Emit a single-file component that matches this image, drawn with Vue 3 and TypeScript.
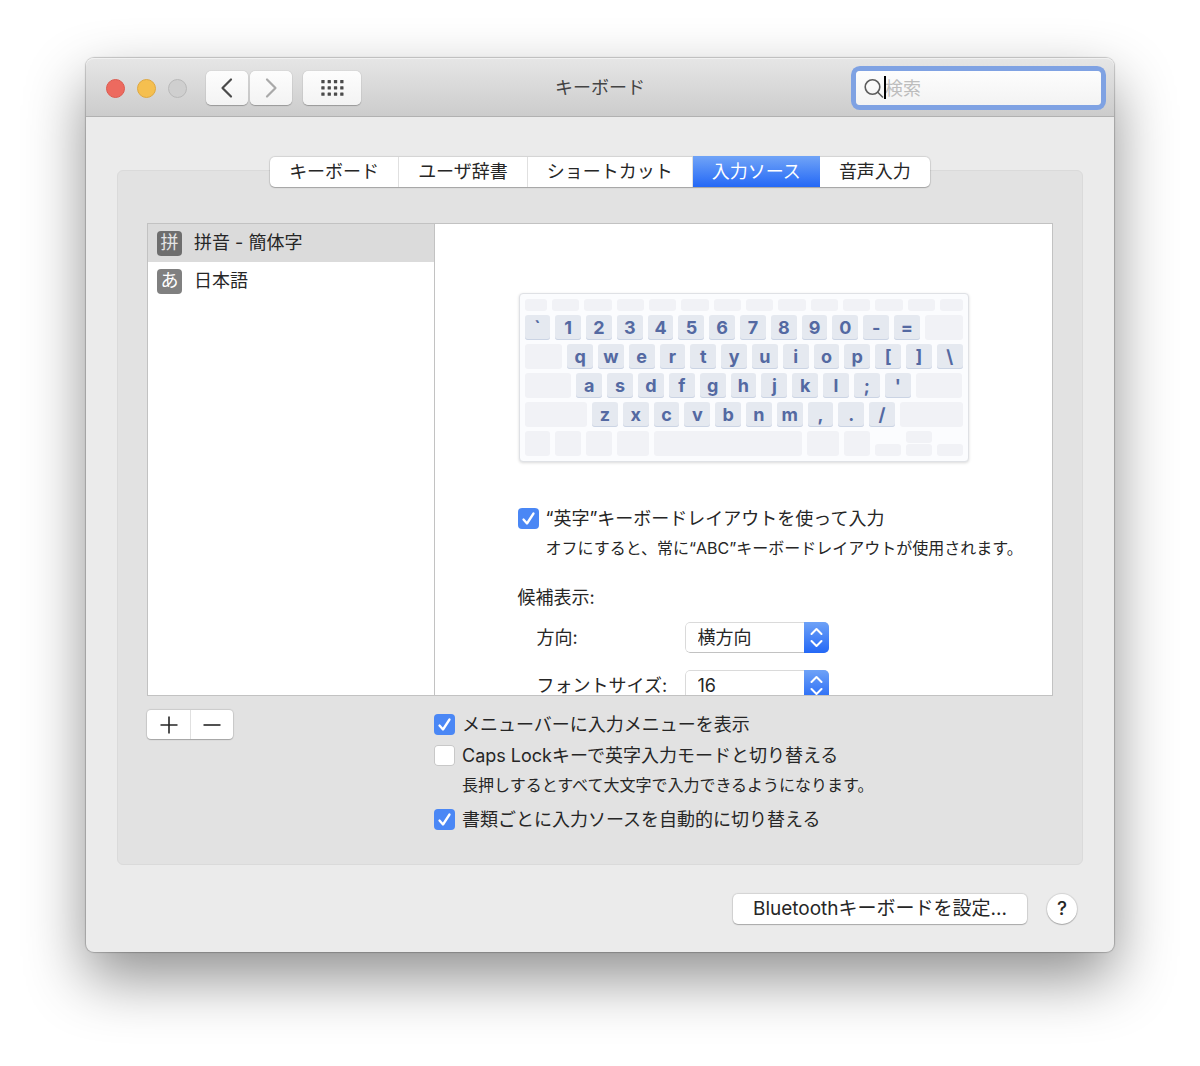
<script setup lang="ts">
import { ref } from 'vue'

interface Key {
  label?: string
  span: number
}

interface Source {
  id: string
  badge: string
  name: string
}

const tabs: string[] = ['キーボード', 'ユーザ辞書', 'ショートカット', '入力ソース', '音声入力']
const activeTab = ref('入力ソース')

const sources: Source[] = [
  { id: 'pinyin', badge: '拼', name: '拼音 - 簡体字' },
  { id: 'japanese', badge: 'あ', name: '日本語' },
]
const activeSource = ref('pinyin')

const letters = (text: string): Key[] => [...text].map((label) => ({ label, span: 26 }))
const blank = (...spans: number[]): Key[] => spans.map((span) => ({ span }))

const functionRow: Key[] = blank(23, ...Array(12).fill(28), 23)
const keyRows: Key[][] = [
  [...letters('`1234567890-='), ...blank(38)],
  [...blank(38), ...letters('qwertyuiop[]\\')],
  [...blank(47), ...letters("asdfghjkl;'"), ...blank(47)],
  [...blank(63), ...letters('zxcvbnm,./'), ...blank(63)],
]
const bottomRow: Key[] = blank(26, 26, 26, 32, 149, 32, 26)

const search = ref('')
const useLetterLayout = ref(true)
const direction = ref('横方向')
const fontSize = ref('16')
const showMenu = ref(true)
const capsLock = ref(false)
const perDocument = ref(true)
</script>

<template>
  <div class="desktop">
    <main class="window">
      <header class="titlebar">
        <div class="controls">
          <div class="lights">
            <button class="light red" aria-label="閉じる"></button>
            <button class="light yellow" aria-label="しまう"></button>
            <button class="light off" aria-label="拡大" disabled></button>
          </div>
          <div class="history">
            <button class="tool" aria-label="戻る">
              <svg width="14" height="22" viewBox="0 0 14 22"><path d="M11 2.500 2.500 11 11 19.500" fill="none" stroke="#4a4a4a" stroke-width="2.200" stroke-linecap="round" stroke-linejoin="round" /></svg>
            </button>
            <button class="tool" aria-label="進む">
              <svg width="14" height="22" viewBox="0 0 14 22"><path d="M3 2.500 11.500 11 3 19.500" fill="none" stroke="#a9a9a9" stroke-width="2.200" stroke-linecap="round" stroke-linejoin="round" /></svg>
            </button>
          </div>
          <button class="tool wide" aria-label="すべてを表示">
            <svg width="23" height="16" viewBox="0 0 23 16" fill="#4a4a4a">
              <template v-for="row in 3" :key="row">
                <rect v-for="col in 4" :key="col" :x="(col - 1) * 6.300 + 0.300" :y="(row - 1) * 6.200" width="3.300" height="3.300" rx="0.500" />
              </template>
            </svg>
          </button>
        </div>
        <h1>キーボード</h1>
        <div class="search">
          <svg width="20" height="20" viewBox="0 0 20 20" fill="none" stroke="#5c5c5c" stroke-width="1.600" stroke-linecap="round"><circle cx="8.500" cy="9" r="7.300" /><path d="m13.800 14.300 4.700 4.700" /></svg>
          <span class="caret"></span>
          <input v-model="search" type="text" placeholder="検索" aria-label="検索" />
        </div>
      </header>

      <div class="content">
        <nav class="tabs" role="tablist">
          <button
            v-for="tab in tabs"
            :key="tab"
            role="tab"
            :aria-selected="tab === activeTab"
            :class="{ active: tab === activeTab }"
            @click="activeTab = tab"
          >{{ tab }}</button>
        </nav>

        <section class="group">
          <div class="panel">
            <ul class="sources">
              <li v-for="source in sources" :key="source.id">
                <button :class="{ active: source.id === activeSource }" @click="activeSource = source.id">
                  <span class="badge">{{ source.badge }}</span>{{ source.name }}
                </button>
              </li>
            </ul>

            <div class="detail">
              <div class="keyboard">
                <div class="keys short">
                  <span v-for="(key, i) in functionRow" :key="i" class="key" :style="{ flexGrow: key.span }"></span>
                </div>
                <div v-for="(row, r) in keyRows" :key="r" class="keys">
                  <span
                    v-for="(key, i) in row"
                    :key="i"
                    class="key"
                    :class="{ lettered: key.label }"
                    :style="{ flexGrow: key.span }"
                  >{{ key.label }}</span>
                </div>
                <div class="keys">
                  <span v-for="(key, i) in bottomRow" :key="i" class="key" :style="{ flexGrow: key.span }"></span>
                  <span class="arrow"><i class="key"></i></span>
                  <span class="arrow"><i class="key"></i><i class="key"></i></span>
                  <span class="arrow"><i class="key"></i></span>
                </div>
              </div>

              <div class="form">
                <label class="check"><input v-model="useLetterLayout" type="checkbox" />“英字”キーボードレイアウトを使って入力</label>
                <p class="note">オフにすると、常に“ABC”キーボードレイアウトが使用されます。</p>
                <h2>候補表示:</h2>
                <div class="field">
                  <label for="direction">方向:</label>
                  <div class="popup">
                    <select id="direction" v-model="direction">
                      <option>横方向</option>
                      <option>縦方向</option>
                    </select>
                    <svg width="25" height="31" viewBox="0 0 25 31"><path d="m7.500 12 5-5 5 5M7.500 19l5 5 5-5" /></svg>
                  </div>
                </div>
                <div class="field">
                  <label for="size">フォントサイズ:</label>
                  <div class="popup">
                    <select id="size" v-model="fontSize">
                      <option>16</option>
                      <option>18</option>
                    </select>
                    <svg width="25" height="31" viewBox="0 0 25 31"><path d="m7.500 12 5-5 5 5M7.500 19l5 5 5-5" /></svg>
                  </div>
                </div>
              </div>
            </div>
          </div>

          <div class="below">
            <div class="edit">
              <button aria-label="追加"><svg width="18" height="18" viewBox="0 0 18 18"><path d="M9 0.500v17M0.500 9h17" /></svg></button>
              <button aria-label="削除"><svg width="18" height="18" viewBox="0 0 18 18"><path d="M0.500 9h17" /></svg></button>
            </div>
            <div class="options">
              <label class="check"><input v-model="showMenu" type="checkbox" />メニューバーに入力メニューを表示</label>
              <label class="check"><input v-model="capsLock" type="checkbox" />Caps Lockキーで英字入力モードと切り替える</label>
              <p class="note">長押しするとすべて大文字で入力できるようになります。</p>
              <label class="check"><input v-model="perDocument" type="checkbox" />書類ごとに入力ソースを自動的に切り替える</label>
            </div>
          </div>
        </section>

        <footer>
          <button class="push">Bluetoothキーボードを設定...</button>
          <button class="help" aria-label="ヘルプ">?</button>
        </footer>
      </div>
    </main>
  </div>
</template>

<style>
body {
  background: #fff;
}
</style>

<style scoped>
.desktop {
  padding: 58px 86px 114px;
}

.window {
  border-radius: 8px;
  background: #ebebeb;
  box-shadow: 0 0 1px 1px rgba(0, 0, 0, 0.2), 0 26px 60px rgba(0, 0, 0, 0.44);
  color: #262626;
  font-family: Inter, "Noto Sans CJK JP", sans-serif;
  font-size: 18px;
  line-height: 30px;
}

button,
input,
select {
  box-sizing: border-box;
  margin: 0;
  padding: 0;
  border: 0;
  color: inherit;
  font: inherit;
}

h1,
h2,
p,
ul {
  margin: 0;
  padding: 0;
  font-size: 18px;
  font-weight: 400;
  list-style: none;
}

svg {
  display: block;
  flex: none;
}

.titlebar {
  display: grid;
  grid-template-columns: 1fr auto 1fr;
  align-items: center;
  height: 56px;
  padding: 2px 13px 0;
  border-bottom: 1px solid #b1b1b1;
  border-radius: 8px 8px 0 0;
  background: linear-gradient(#e6e6e6, #cccccc);
  box-shadow: inset 0 1px #f1f1f1;
}

.titlebar h1 {
  color: #444;
}

.controls,
.lights,
.history {
  display: flex;
  align-items: center;
}

.lights {
  gap: 12px;
  margin: 0 19px 0 7px;
}

.light {
  width: 19px;
  height: 19px;
  border: 1px solid #dc5b50;
  border-radius: 50%;
}

.red {
  background: #ed6a5f;
}

.yellow {
  border-color: #dfa840;
  background: #f5bf4f;
}

.off {
  border-color: #b9b9b9;
  background: #cfcfcf;
}

.history {
  gap: 2px;
  margin-right: 11px;
}

.tool {
  display: flex;
  align-items: center;
  justify-content: center;
  width: 42px;
  height: 34px;
  border-radius: 5px;
  background: linear-gradient(#fdfdfd, #f3f3f3);
  box-shadow: 0 0 1px rgba(0, 0, 0, 0.3), 0 1px 1px rgba(0, 0, 0, 0.25);
}

.wide {
  width: 58px;
}

.search {
  position: relative;
  display: flex;
  align-items: center;
  justify-self: end;
  box-sizing: border-box;
  width: 245px;
  height: 34px;
  padding-left: 8px;
  border-radius: 4px;
  background: linear-gradient(#fdfdfd, #f3f3f3);
  box-shadow: 0 0 0 5px #7fa2e3;
}

.search input {
  flex: 1;
  min-width: 0;
  height: 34px;
  padding-left: 1px;
  background: none;
  outline: none;
}

.search input::placeholder {
  color: #bdbdbd;
  opacity: 1;
}

.caret {
  position: absolute;
  top: 5px;
  left: 28px;
  width: 2px;
  height: 23px;
  background: #000;
}

.content {
  padding: 40px 31px 28px;
}

.tabs {
  position: relative;
  display: flex;
  width: fit-content;
  margin: 0 auto;
  border-radius: 5px;
  background: #fff;
  box-shadow: 0 0 1px 1px rgba(0, 0, 0, 0.1), 0 1px 1px rgba(0, 0, 0, 0.2);
}

.tabs button {
  height: 30px;
  padding: 0 19px;
  border-right: 1px solid #e0e0e0;
  background: none;
  box-sizing: content-box;
}

.tabs button:last-child {
  border-right: 0;
}

.tabs .active {
  border-right: 0;
  background: linear-gradient(#6ea2f7, #2468f6);
  box-shadow: 0 -1px #6ea2f7;
  color: #fff;
}

.group {
  margin-top: -17px;
  padding: 52px 29px 29px;
  border: 1px solid #dadada;
  border-radius: 6px;
  background: #e2e2e2;
}

.panel {
  display: flex;
  box-sizing: border-box;
  height: 473px;
  overflow: hidden;
  border: 1px solid #c2c2c2;
  background: #fff;
}

.sources {
  flex: none;
  width: 286px;
  border-right: 1px solid #c2c2c2;
}

.sources button {
  display: flex;
  align-items: center;
  gap: 12px;
  width: 100%;
  height: 38px;
  padding-left: 9px;
  background: none;
  text-align: left;
}

.sources .active {
  background: #dbdbdb;
}

.badge {
  width: 25px;
  height: 25px;
  border-radius: 4px;
  background: #808080;
  color: #fff;
  line-height: 24px;
  text-align: center;
}

.active .badge {
  background: #6e6e6e;
  color: #e4e4e4;
}

.detail {
  flex: 1;
  padding-top: 69px;
}

.keyboard {
  display: flex;
  flex-direction: column;
  gap: 4px;
  box-sizing: border-box;
  width: 450px;
  margin: 0 auto;
  padding: 5px;
  border: 1px solid #dfe1e5;
  border-radius: 4px;
  background: #fbfcfe;
  box-shadow: 0 1px 3px rgba(0, 0, 0, 0.15);
}

.keys {
  display: flex;
  gap: 5px;
  height: 25px;
}

.short {
  height: 12px;
}

.key {
  flex: 1 1 0;
  min-width: 0;
  border-radius: 3px;
  background: #f1f2f6;
}

.lettered {
  background: #e5e9f0;
  box-shadow: inset 0 -1px #cbd4e4;
  color: #5469a2;
  font-weight: 700;
  line-height: 25px;
  text-align: center;
}

.arrow {
  display: flex;
  flex: 26 1 0;
  flex-direction: column;
  justify-content: flex-end;
  gap: 1px;
}

.arrow .key {
  flex: none;
  height: 12px;
}

.form {
  width: 452px;
  margin: 41px auto 0;
  white-space: nowrap;
}

.check {
  display: flex;
  align-items: center;
  gap: 7px;
  width: fit-content;
  height: 31px;
}

.check input {
  flex: none;
  width: 21px;
  height: 21px;
  border-radius: 4px;
  background: #fff;
  box-shadow: inset 0 0 0 1px #c8c8c8;
  appearance: none;
}

.check input:checked {
  background: #4a87f5 url("data:image/svg+xml,%3Csvg xmlns='http://www.w3.org/2000/svg' viewBox='0 0 21 21'%3E%3Cpath d='M5.500 11.500 9 15.500 15.500 5.500' fill='none' stroke='white' stroke-width='2.300' stroke-linecap='round' stroke-linejoin='round'/%3E%3C/svg%3E") center / 21px 21px;
  box-shadow: none;
}

.note {
  padding-left: 28px;
  font-size: 16px;
  line-height: 29px;
}

.form h2 {
  margin-top: 20px;
}

.field {
  display: flex;
  align-items: center;
  margin-top: 9px;
  padding-left: 19px;
}

.field + .field {
  margin-top: 17px;
}

.field label {
  width: 148px;
}

.popup {
  position: relative;
  width: 144px;
  height: 31px;
  overflow: hidden;
  border-radius: 5px;
}

.popup select {
  width: 100%;
  height: 31px;
  padding-left: 12px;
  border: 1px solid #dadada;
  border-bottom-color: #c2c2c2;
  border-radius: 5px;
  background: #fff;
  appearance: none;
}

.popup svg {
  position: absolute;
  top: 0;
  right: 0;
  background: linear-gradient(#6ea2f7, #2468f6);
  fill: none;
  stroke: #fff;
  stroke-width: 2;
  stroke-linecap: round;
  stroke-linejoin: round;
  pointer-events: none;
}

.below {
  display: grid;
  grid-template-columns: 287px 1fr;
  align-items: start;
  padding-top: 13px;
}

.edit {
  display: flex;
  width: fit-content;
  margin-top: 1px;
  border-radius: 4px;
  background: #fff;
  box-shadow: 0 0 1px 1px rgba(0, 0, 0, 0.1), 0 1px 1px rgba(0, 0, 0, 0.2);
}

.edit button {
  display: flex;
  align-items: center;
  justify-content: center;
  width: 43px;
  height: 29px;
  background: none;
}

.edit button + button {
  border-left: 1px solid #e0e0e0;
}

.edit svg {
  fill: none;
  stroke: #262626;
  stroke-width: 1.6;
}

.options .note + .check {
  margin-top: 4px;
}

footer {
  display: flex;
  justify-content: flex-end;
  gap: 20px;
  padding: 29px 6px 0 0;
}

.push,
.help {
  height: 30px;
  border-radius: 5px;
  background: #fff;
  box-shadow: 0 0 1px 1px rgba(0, 0, 0, 0.1), 0 1px 1px rgba(0, 0, 0, 0.2);
  font-size: 19px;
}

.push {
  padding: 0 20px;
}

.help {
  width: 30px;
  border-radius: 50%;
  font-weight: 500;
}
</style>
